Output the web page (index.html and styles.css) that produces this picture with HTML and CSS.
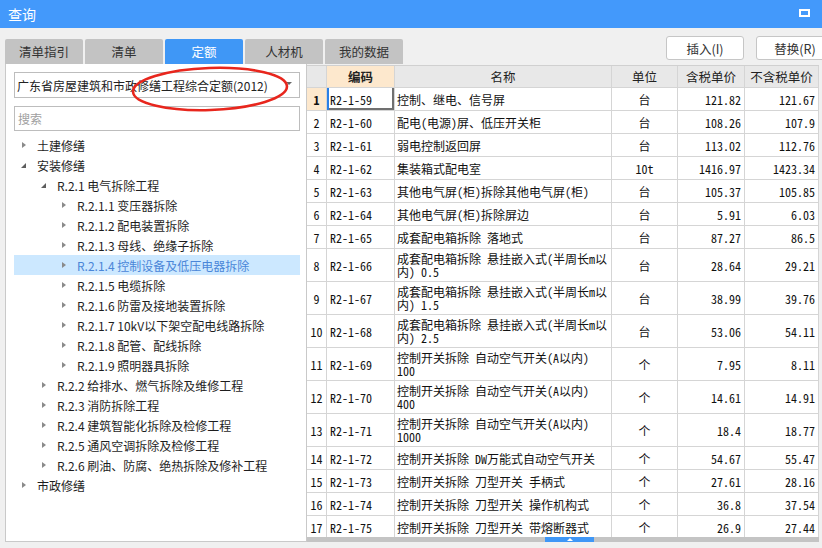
FILE: index.html
```html
<!DOCTYPE html>
<html lang="zh-CN">
<head>
<meta charset="utf-8">
<title>查询</title>
<link rel="stylesheet" href="styles.css">
</head>
<body>
<div class="window">
  <header class="titlebar">
    <span class="title">查询</span>
    <svg class="max-icon" width="11" height="8" viewBox="0 0 11 8"><rect x="1" y="1" width="9" height="6" fill="none" stroke="#fff" stroke-width="2"/></svg>
  </header>

  <div class="toolbar">
    <nav class="tabs">
      <div class="tab">清单指引</div>
      <div class="tab">清单</div>
      <div class="tab active">定额</div>
      <div class="tab">人材机</div>
      <div class="tab">我的数据</div>
    </nav>
    <div class="actions">
      <button class="btn">插入(I)</button>
      <button class="btn">替换(R)</button>
    </div>
  </div>

  <div class="content">
    <aside class="panel">
      <div class="select"><span class="select-text">广东省房屋建筑和市政修缮工程综合定额(2012)</span><span class="caret"></span></div>
      <div class="search">搜索</div>
      <ul class="tree">
        <li class="node l0"><span class="arrow closed"></span>土建修缮</li>
        <li class="node l0"><span class="arrow open"></span>安装修缮</li>
        <li class="node l1"><span class="arrow open"></span>R.2.1 电气拆除工程</li>
        <li class="node l2"><span class="arrow closed"></span>R.2.1.1 变压器拆除</li>
        <li class="node l2"><span class="arrow closed"></span>R.2.1.2 配电装置拆除</li>
        <li class="node l2"><span class="arrow closed"></span>R.2.1.3 母线、绝缘子拆除</li>
        <li class="node l2 selected"><span class="arrow closed"></span>R.2.1.4 控制设备及低压电器拆除</li>
        <li class="node l2"><span class="arrow closed"></span>R.2.1.5 电缆拆除</li>
        <li class="node l2"><span class="arrow closed"></span>R.2.1.6 防雷及接地装置拆除</li>
        <li class="node l2"><span class="arrow closed"></span>R.2.1.7 10kV以下架空配电线路拆除</li>
        <li class="node l2"><span class="arrow closed"></span>R.2.1.8 配管、配线拆除</li>
        <li class="node l2"><span class="arrow closed"></span>R.2.1.9 照明器具拆除</li>
        <li class="node l1"><span class="arrow closed"></span>R.2.2 给排水、燃气拆除及维修工程</li>
        <li class="node l1"><span class="arrow closed"></span>R.2.3 消防拆除工程</li>
        <li class="node l1"><span class="arrow closed"></span>R.2.4 建筑智能化拆除及检修工程</li>
        <li class="node l1"><span class="arrow closed"></span>R.2.5 通风空调拆除及检修工程</li>
        <li class="node l1"><span class="arrow closed"></span>R.2.6 刷油、防腐、绝热拆除及修补工程</li>
        <li class="node l0"><span class="arrow closed"></span>市政修缮</li>
      </ul>
    </aside>

    <section class="grid">
      <div class="row head">
        <div class="cell">&nbsp;</div>
        <div class="cell hl strong">编码</div>
        <div class="cell">名称</div>
        <div class="cell">单位</div>
        <div class="cell">含税单价</div>
        <div class="cell">不含税单价</div>
      </div>
      <div class="body">
        <div class="row"><div class="cell num hl strong">1</div><div class="cell code current">R2-1-59</div><div class="cell name">控制、继电、信号屏</div><div class="cell unit">台</div><div class="cell price">121.82</div><div class="cell price">121.67</div></div>
        <div class="row"><div class="cell num">2</div><div class="cell code">R2-1-60</div><div class="cell name">配电(电源)屏、低压开关柜</div><div class="cell unit">台</div><div class="cell price">108.26</div><div class="cell price">107.9</div></div>
        <div class="row"><div class="cell num">3</div><div class="cell code">R2-1-61</div><div class="cell name">弱电控制返回屏</div><div class="cell unit">台</div><div class="cell price">113.02</div><div class="cell price">112.76</div></div>
        <div class="row"><div class="cell num">4</div><div class="cell code">R2-1-62</div><div class="cell name">集装箱式配电室</div><div class="cell unit">10t</div><div class="cell price">1416.97</div><div class="cell price">1423.34</div></div>
        <div class="row"><div class="cell num">5</div><div class="cell code">R2-1-63</div><div class="cell name">其他电气屏(柜)拆除其他电气屏(柜)</div><div class="cell unit">台</div><div class="cell price">105.37</div><div class="cell price">105.85</div></div>
        <div class="row"><div class="cell num">6</div><div class="cell code">R2-1-64</div><div class="cell name">其他电气屏(柜)拆除屏边</div><div class="cell unit">台</div><div class="cell price">5.91</div><div class="cell price">6.03</div></div>
        <div class="row"><div class="cell num">7</div><div class="cell code">R2-1-65</div><div class="cell name">成套配电箱拆除 落地式</div><div class="cell unit">台</div><div class="cell price">87.27</div><div class="cell price">86.5</div></div>
        <div class="row tall"><div class="cell num">8</div><div class="cell code">R2-1-66</div><div class="cell name">成套配电箱拆除 悬挂嵌入式(半周长m以内) 0.5</div><div class="cell unit">台</div><div class="cell price">28.64</div><div class="cell price">29.21</div></div>
        <div class="row tall"><div class="cell num">9</div><div class="cell code">R2-1-67</div><div class="cell name">成套配电箱拆除 悬挂嵌入式(半周长m以内) 1.5</div><div class="cell unit">台</div><div class="cell price">38.99</div><div class="cell price">39.76</div></div>
        <div class="row tall"><div class="cell num">10</div><div class="cell code">R2-1-68</div><div class="cell name">成套配电箱拆除 悬挂嵌入式(半周长m以内) 2.5</div><div class="cell unit">台</div><div class="cell price">53.06</div><div class="cell price">54.11</div></div>
        <div class="row tall"><div class="cell num">11</div><div class="cell code">R2-1-69</div><div class="cell name">控制开关拆除 自动空气开关(A以内) 100</div><div class="cell unit">个</div><div class="cell price">7.95</div><div class="cell price">8.11</div></div>
        <div class="row tall"><div class="cell num">12</div><div class="cell code">R2-1-70</div><div class="cell name">控制开关拆除 自动空气开关(A以内) 400</div><div class="cell unit">个</div><div class="cell price">14.61</div><div class="cell price">14.91</div></div>
        <div class="row tall"><div class="cell num">13</div><div class="cell code">R2-1-71</div><div class="cell name">控制开关拆除 自动空气开关(A以内) 1000</div><div class="cell unit">个</div><div class="cell price">18.4</div><div class="cell price">18.77</div></div>
        <div class="row"><div class="cell num">14</div><div class="cell code">R2-1-72</div><div class="cell name">控制开关拆除 DW万能式自动空气开关</div><div class="cell unit">个</div><div class="cell price">54.67</div><div class="cell price">55.47</div></div>
        <div class="row"><div class="cell num">15</div><div class="cell code">R2-1-73</div><div class="cell name">控制开关拆除 刀型开关 手柄式</div><div class="cell unit">个</div><div class="cell price">27.61</div><div class="cell price">28.16</div></div>
        <div class="row"><div class="cell num">16</div><div class="cell code">R2-1-74</div><div class="cell name">控制开关拆除 刀型开关 操作机构式</div><div class="cell unit">个</div><div class="cell price">36.8</div><div class="cell price">37.54</div></div>
        <div class="row"><div class="cell num">17</div><div class="cell code">R2-1-75</div><div class="cell name">控制开关拆除 刀型开关 带熔断器式</div><div class="cell unit">个</div><div class="cell price">26.9</div><div class="cell price">27.44</div></div>
      </div>
      <div class="hscroll"><div class="thumb"><span class="thumb-arrow"></span></div></div>
    </section>
  </div>

  <svg class="annotation" width="170" height="54" viewBox="0 0 170 54">
    <ellipse cx="82" cy="25" rx="77" ry="21" transform="rotate(-2 82 25)" fill="none" stroke="#e8261d" stroke-width="2.6"/>
  </svg>
</div>
</body>
</html>
```

FILE: styles.css
```css
* { box-sizing: border-box; }

html, body {
  margin: 0;
  padding: 0;
  background: #f0f0f0;
}

body {
  width: 822px;
  height: 548px;
  overflow: hidden;
  font-family: "Noto Sans CJK SC", "Microsoft YaHei", sans-serif;
  font-size: 12px;
  color: #1e1e1e;
}

.window {
  position: relative;
  width: 822px;
  height: 548px;
}

/* Title bar */
.titlebar {
  height: 28px;
  background: #4399fb;
  display: flex;
  align-items: center;
  justify-content: space-between;
  padding: 0 12px 0 8px;
}

.title {
  color: #fff;
  font-size: 14px;
  line-height: 1;
}

.max-icon { display: block; margin-top: -2px; }

/* Toolbar with tabs and buttons */
.toolbar {
  height: 36px;
  display: flex;
  align-items: flex-end;
  overflow: hidden;
}

.tabs {
  display: flex;
  gap: 2px;
  padding-left: 5px;
  flex-shrink: 0;
}

.tab {
  width: 78px;
  height: 25px;
  background: #c3c3c3;
  border-radius: 2px 2px 0 0;
  display: flex;
  align-items: center;
  justify-content: center;
  font-size: 12.5px;
  color: #333;
}

.tab.active {
  background: #3f97f6;
  color: #fff;
}

.actions {
  display: flex;
  gap: 12px;
  align-self: flex-start;
  margin-top: 8px;
  margin-left: 263px;
  flex-shrink: 0;
}

.btn {
  width: 78px;
  height: 24px;
  flex-shrink: 0;
  background: #fff;
  border: 1px solid #c6c6c6;
  border-radius: 3px;
  font-family: inherit;
  font-size: 12.5px;
  color: #333;
  padding: 0;
}

/* Content */
.content {
  display: flex;
  align-items: flex-start;
  height: 478px;
}

.panel {
  width: 302px;
  height: 478px;
  margin-left: 5px;
  background: #fff;
  border: 1px solid #c9c9c9;
  border-top: none;
  padding: 8px 6px 0 8px;
  flex-shrink: 0;
}

.select {
  height: 26px;
  border: 1px solid #bdbdbd;
  display: flex;
  align-items: center;
  justify-content: space-between;
  padding: 0 7px 0 2px;
  font-size: 12px;
  color: #222;
}

.caret {
  width: 0;
  height: 0;
  border-left: 3px solid transparent;
  border-right: 3px solid transparent;
  border-top: 3px solid #666;
  margin-top: -4px;
}

.search {
  height: 25px;
  margin-top: 8px;
  border: 1px solid #bdbdbd;
  display: flex;
  align-items: center;
  padding-left: 3px;
  color: #a0a0a0;
  font-size: 12px;
}

.tree {
  list-style: none;
  margin: 4px 0 0;
  padding: 0;
}

.node {
  height: 20px;
  display: flex;
  align-items: center;
  white-space: nowrap;
  color: #1e1e1e;
}

.node.l0 { padding-left: 0; }
.node.l1 { padding-left: 20px; }
.node.l2 { padding-left: 40px; }

.node.selected {
  background: #cce8ff;
  color: #4a86d8;
}

.arrow {
  width: 23px;
  height: 20px;
  position: relative;
  flex-shrink: 0;
}

.arrow.closed::before {
  content: "";
  position: absolute;
  left: 8px;
  top: 6.5px;
  border-left: 4px solid #8a8a8a;
  border-top: 3.5px solid transparent;
  border-bottom: 3.5px solid transparent;
}

.arrow.open::before {
  content: "";
  position: absolute;
  left: 7px;
  top: 8px;
  border-bottom: 5px solid #5e5e5e;
  border-left: 5px solid transparent;
}

/* Data grid */
.grid {
  width: 512px;
  margin-top: 1px;
  border-top: 1px solid #d0d0d0;
  flex-shrink: 0;
}

.row {
  display: grid;
  grid-template-columns: 20px 68px 217px 66px 67px 74px;
  height: 23px;
}

.row.tall { height: 33px; }

.cell {
  border-right: 1px solid #d5d5d5;
  border-bottom: 1px solid #d5d5d5;
  display: flex;
  align-items: center;
  overflow: hidden;
  background: #fff;
  font-family: "Noto Sans Mono CJK SC", "Noto Sans CJK SC", monospace;
  font-size: 12px;
  line-height: 13px;
  color: #111;
}

.head {
  height: 22px;
}

.head .cell {
  background: #e8e8e8;
  justify-content: center;
  font-family: "Noto Sans CJK SC", sans-serif;
  font-size: 12.5px;
  color: #222;
}

.head .cell.hl,
.cell.hl {
  background: #fde8cd;
}

.strong { font-weight: bold; }

.body {
  height: 449px;
  overflow: hidden;
}

.num { justify-content: center; }

.code { padding-left: 3px; }

.code.current {
  box-shadow: inset 2px 0 0 #2a7fe6, inset -2px -2px 0 #707070;
}

.name {
  padding-left: 2px;
  padding-right: 1px;
}

.unit { justify-content: center; }

.price {
  justify-content: flex-end;
  padding-right: 3px;
}

.hscroll {
  height: 5px;
  background: #c4c4c4;
  position: relative;
}

.thumb {
  position: absolute;
  left: 238px;
  top: 0;
  width: 49px;
  height: 5px;
  background: #3f97f6;
}

.thumb-arrow {
  position: absolute;
  left: 22px;
  top: 1px;
  border-bottom: 3px solid #fff;
  border-left: 3px solid transparent;
  border-right: 3px solid transparent;
}

/* Hand-drawn annotation over the dropdown */
.annotation {
  position: absolute;
  left: 128px;
  top: 64px;
  pointer-events: none;
}
```
